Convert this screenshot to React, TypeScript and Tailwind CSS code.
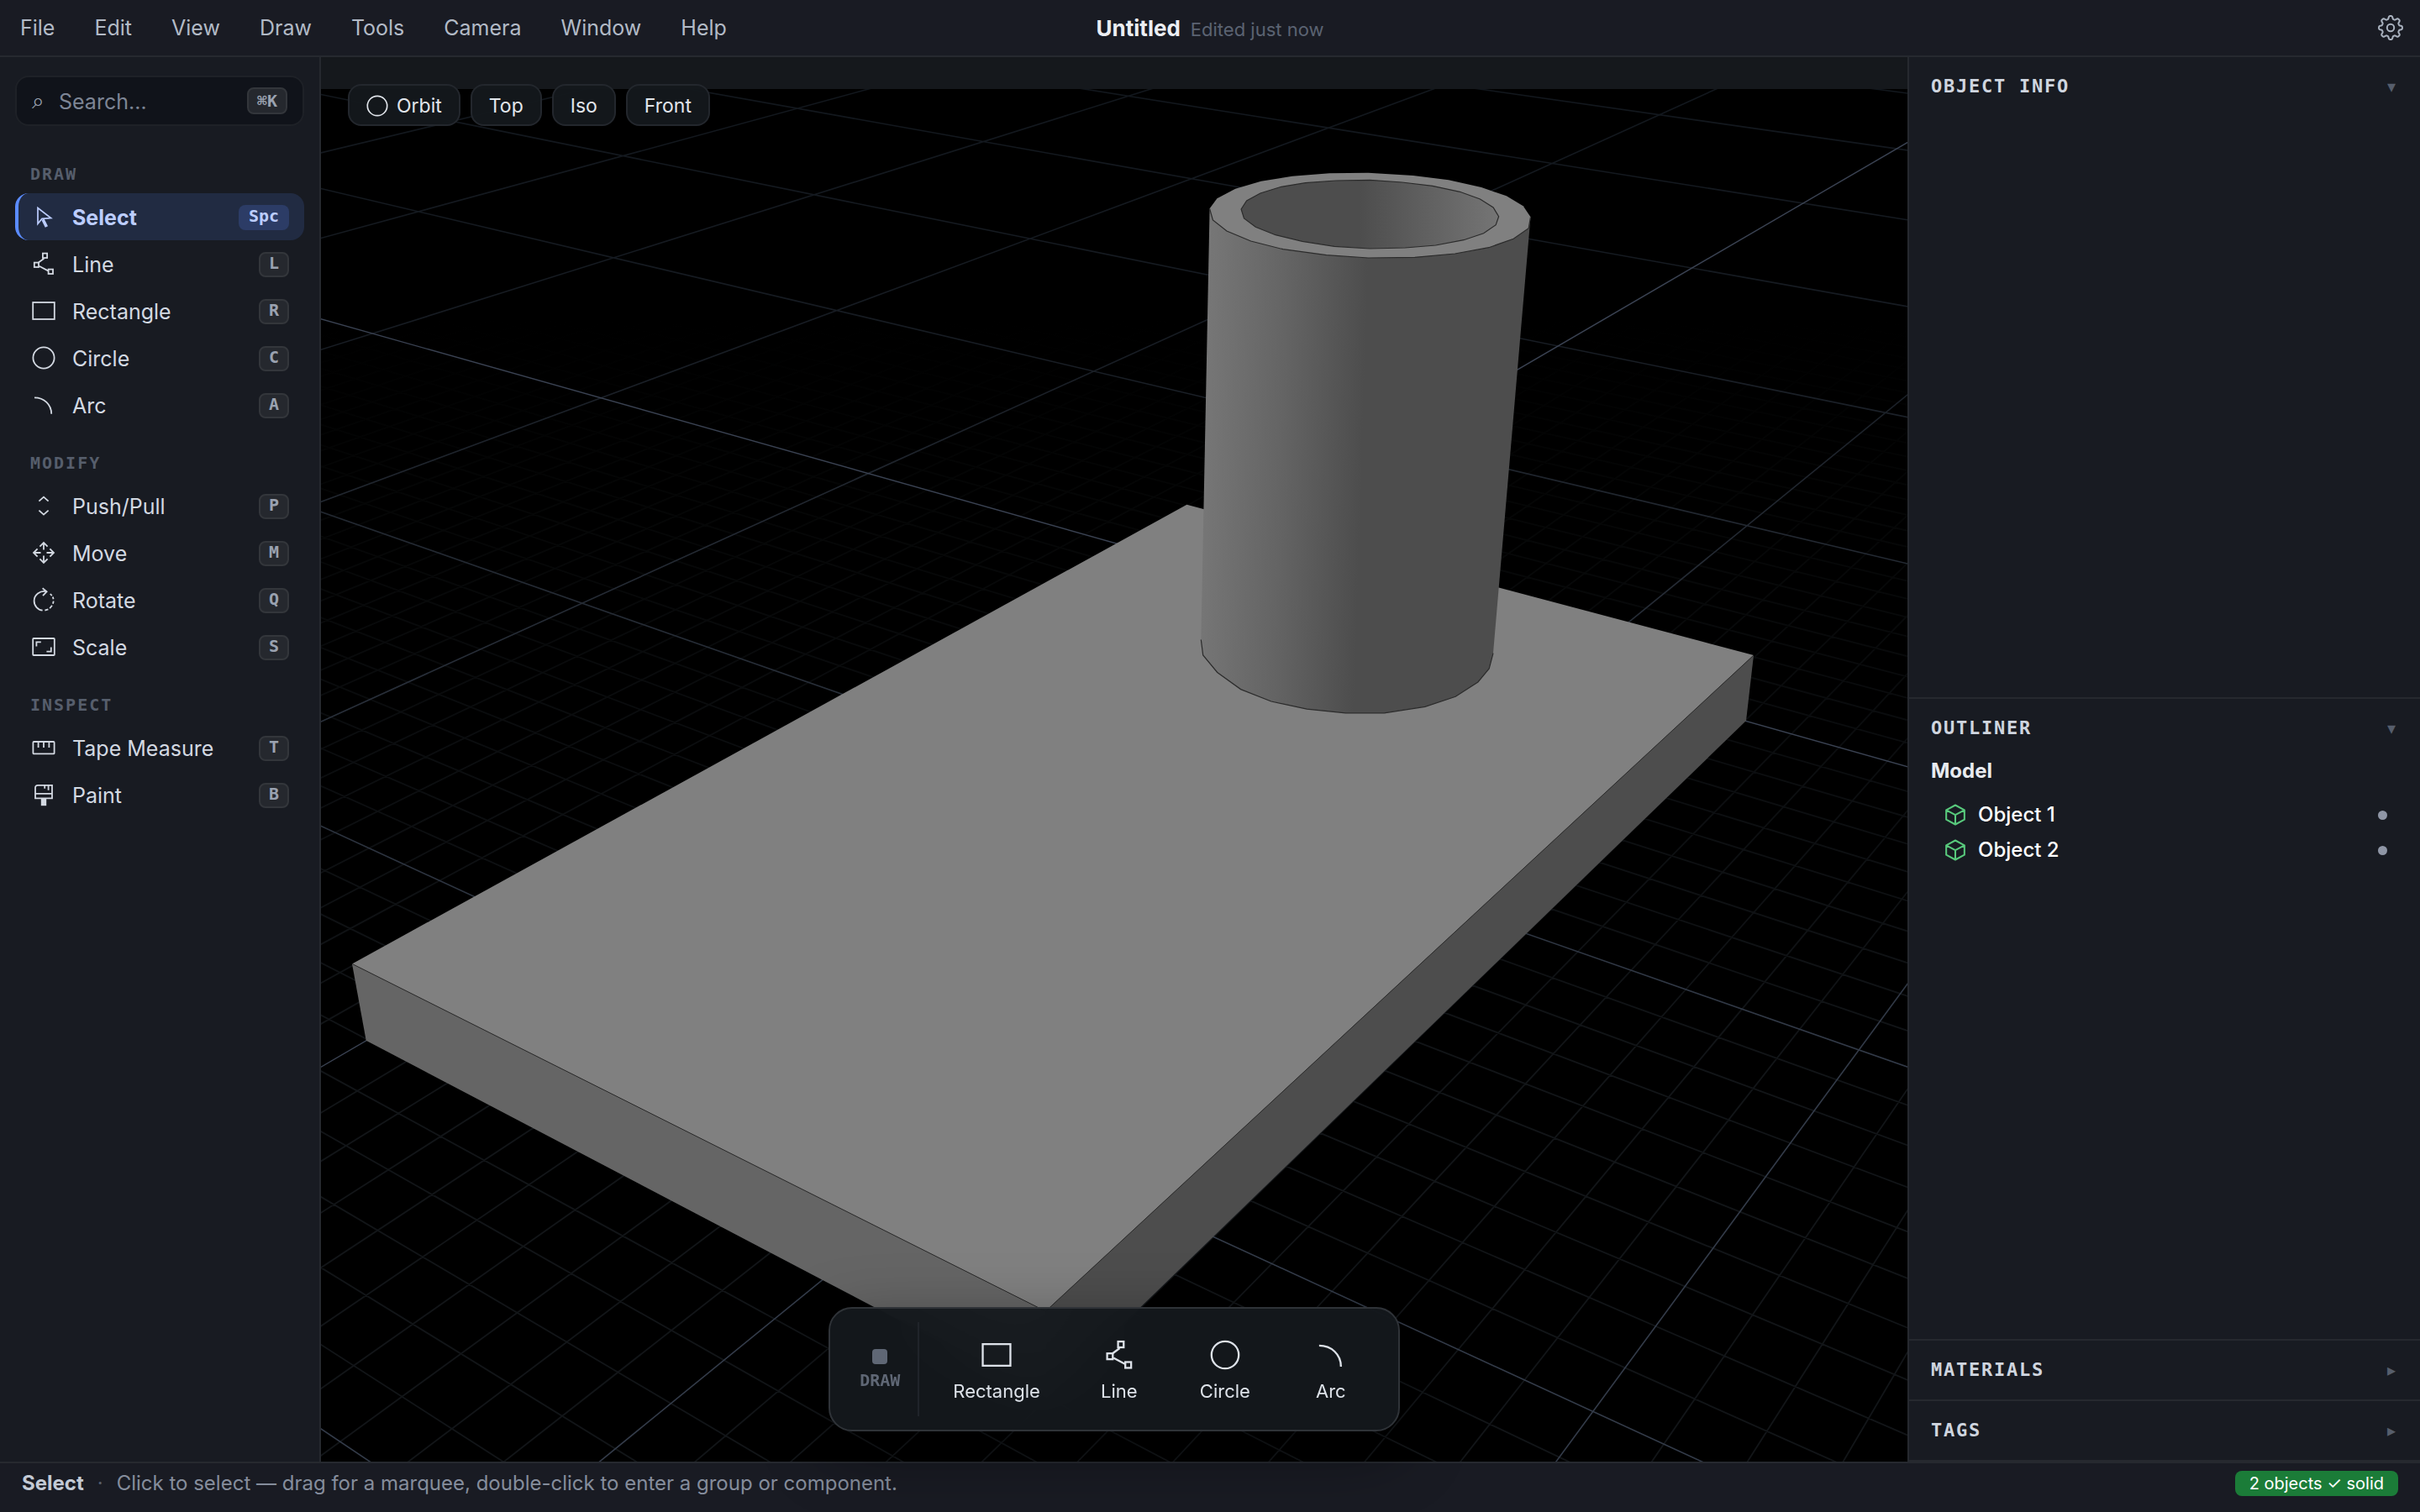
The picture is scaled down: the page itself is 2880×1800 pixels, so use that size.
import type { ReactNode } from 'react';

/* ---------- icons ---------- */

type IconProps = { className?: string };

function Icon({ className = 'size-7', children }: IconProps & { children: ReactNode }) {
  return (
    <svg
      viewBox="0 0 28 28"
      className={`shrink-0 overflow-visible ${className}`}
      fill="none"
      stroke="currentColor"
      strokeWidth="1.8"
      aria-hidden="true"
    >
      {children}
    </svg>
  );
}

const SelectIcon = (p: IconProps) => (
  <Icon {...p}>
    <path d="M7 3.6V22.4L12 16.3L22.6 15.6Z" strokeWidth="1.7" />
    <path d="M13 17.2L17.4 26" strokeWidth="3.6" />
  </Icon>
);
const LineIcon = (p: IconProps) => (
  <Icon {...p}>
    <path d="M14.4 7.8L7.8 12.6M8.6 16.8L19.2 22.4" />
    <rect x="12.9" y="1.6" width="5.2" height="5.4" />
    <rect x="2.8" y="12.6" width="5.2" height="5.4" />
    <rect x="19.6" y="20.6" width="5.4" height="5.4" />
  </Icon>
);
const RectangleIcon = (p: IconProps) => (
  <Icon {...p}>
    <rect x="1.2" y="4" width="25.6" height="20" />
  </Icon>
);
const CircleIcon = (p: IconProps) => (
  <Icon {...p}>
    <circle cx="14" cy="14" r="12.6" />
  </Icon>
);
const ArcIcon = (p: IconProps) => (
  <Icon {...p}>
    <path d="M3 5.4C14.5 5.4 23.2 13.5 23.2 24.8" />
  </Icon>
);
const PushPullIcon = (p: IconProps) => (
  <Icon {...p}>
    <path d="M8.4 8.6L14 3.6L19.6 8.6M8.4 19.6L14 24.6L19.6 19.6" />
  </Icon>
);
const MoveIcon = (p: IconProps) => (
  <Icon {...p}>
    <path d="M14 10.5V2.2M9.4 6.6L14 2L18.6 6.6M14 17.5V25.8M9.4 21.4L14 26L18.6 21.4M10.5 14H2.2M6.6 9.4L2 14L6.6 18.6M17.5 14H25.8M21.4 9.4L26 14L21.4 18.6" />
  </Icon>
);
const RotateIcon = (p: IconProps) => (
  <Icon {...p}>
    <path d="M17.4 4.2C9.5 2.6 2.6 8.4 2.6 15.2C2.6 21.3 7.2 26.2 12.6 26.6" />
    <path d="M12.6 0.2L17.6 4.4L13 9.2" />
    <path d="M15.4 26.6L19.4 25.4M21.2 24.2L24 20.8M25 18.8L25.7 15.6M25.6 13.2L24.8 10.4M23.8 9.2L21.8 7" />
  </Icon>
);
const ScaleIcon = (p: IconProps) => (
  <Icon {...p}>
    <rect x="1.2" y="4" width="25.6" height="20" rx="0.8" />
    <path d="M5.4 13.6V8.4H10.8M17.4 19.6H22.8V14.4" />
  </Icon>
);
const TapeIcon = (p: IconProps) => (
  <Icon {...p}>
    <rect x="1.4" y="7" width="25.2" height="14.4" rx="1" />
    <path d="M7.6 7.4V14M14 7.4V14M20.4 7.4V14" />
  </Icon>
);
const PaintIcon = (p: IconProps) => (
  <Icon {...p}>
    <path d="M7 2.8H24V18.4H4V5.8C4 4.2 5.2 2.8 7 2.8ZM4 12.8H24" />
    <path d="M15.2 3V6.8M19.6 3V8.8" />
    <path d="M14 18.6V27.2" strokeWidth="6.4" />
  </Icon>
);
const CubeIcon = () => (
  <svg viewBox="0 0 24 24" className="size-[26px] text-[#58c97c]" fill="none" stroke="currentColor" strokeWidth="1.9" strokeLinejoin="round" aria-hidden="true">
    <path d="M12 1.4L22 6.8V17.2L12 22.6L2 17.2V6.8ZM2 6.8L12 12.2L22 6.8M12 12.2V22.6" />
  </svg>
);

/** Eight-lobed cog outline. */
const COG =
  Array.from({ length: 144 }, (_, i) => {
    const a = (i / 144) * Math.PI * 2;
    const r = 12.2 + 1.8 * Math.tanh(2 * Math.cos(8 * a));
    return `${i ? 'L' : 'M'}${(15 + r * Math.cos(a)).toFixed(2)} ${(15 + r * Math.sin(a)).toFixed(2)}`;
  }).join('') + 'Z';

const GearIcon = () => (
  <svg viewBox="0 0 30 30" className="size-[30px]" fill="none" stroke="currentColor" strokeWidth="2" strokeLinejoin="round" aria-hidden="true">
    <path d={COG} />
    <circle cx="15" cy="15" r="4.2" />
  </svg>
);

/* ---------- 3D scene ---------- */

/** Projection of the ground plane (u, v) to scene units. */
const H = [595.5354, -362.0939, 1583.7382, -97.3783, -69.4784, 1030.0147, 0.1673191, 0.1204076];
const depth = (u: number, v: number) => H[6] * u + H[7] * v + 1;
const project = (u: number, v: number) => {
  const w = depth(u, v);
  return `${((H[0] * u + H[1] * v + H[2]) / w).toFixed(1)} ${((H[3] * u + H[4] * v + H[5]) / w).toFixed(1)}`;
};

function segment(u0: number, v0: number, u1: number, v1: number) {
  const near = 0.15;
  const w0 = depth(u0, v0);
  const w1 = depth(u1, v1);
  if (w1 <= near) return '';
  if (w0 < near) {
    const t = (near - w0) / (w1 - w0);
    return `M${project(u0 + (u1 - u0) * t, v0 + (v1 - v0) * t)}L${project(u1, v1)}`;
  }
  return `M${project(u0, v0)}L${project(u1, v1)}`;
}

function gridPath(from: number, to: number, far: number, skip: (n: number) => boolean) {
  let d = '';
  for (let n = from; n <= to; n++) {
    if (skip(n)) continue;
    const k = n / 10;
    d += segment(k, -8, k, far) + segment(-8, k, far, k);
  }
  return d;
}

const MINOR = gridPath(-40, 90, 14, (n) => n % 10 === 0);
const MAJOR = gridPath(-40, 160, 30, (n) => n % 10 !== 0 || n === 10);
const AXES = segment(1, -8, 1, 30) + segment(-8, 1, 30, 1);

const RIM_BACK =
  '1439.6,248.3 1448.4,236.3 1470.2,224.7 1500.8,215.7 1538,209.7 1582.3,206.3 1628.3,205.7 1681.8,209 1724,214.3 1763,223 1792.8,233.3 1812.7,245.3 1821.5,258.3';
const RIM_FRONT =
  '1821.5,258.3 1819.2,271.7 1801.2,284.3 1771.8,294.7 1731.6,302 1683.8,306.3 1628.3,307 1578.5,303.7 1526.8,296.7 1488.6,287 1459.9,275 1443.4,262 1439.6,248.3';
const BORE =
  '1477.1,249 1483.6,239 1500,230 1524.9,222.3 1553.6,217.7 1590,215 1630.2,214.3 1668.4,217 1704.8,221.3 1737.3,228.3 1761.4,237 1777.1,247 1783.6,257.7 1780.2,267.7 1765.6,277.7 1741.9,285.7 1708.6,292 1672.3,295 1630.2,296 1588,293.3 1549.8,287.3 1518,279.7 1494.3,270.3 1480.5,260';
const FOOT =
  '1429.3,761.5 1431.7,779.9 1448.7,800.5 1476.6,820.6 1512.9,835 1555.3,844.2 1601.4,848.8 1647.4,848.8 1695.9,841.3 1732.2,829.2 1758.9,812 1772.2,795.9 1777,777.6';

function Scene() {
  return (
    <svg
      viewBox="382 106 1888 1634"
      preserveAspectRatio="xMidYMid slice"
      className="absolute inset-0 size-full bg-black"
      role="img"
      aria-label="Slab with a hollow cylinder on it"
    >
      <defs>
        <linearGradient id="minor" gradientUnits="userSpaceOnUse" x1="0" y1="380" x2="0" y2="1500">
          <stop offset="0" stopColor="#000000" />
          <stop offset="0.2" stopColor="#050606" />
          <stop offset="0.45" stopColor="#0b0d0f" />
          <stop offset="0.8" stopColor="#121518" />
        </linearGradient>
        <linearGradient id="major" gradientUnits="userSpaceOnUse" x1="0" y1="100" x2="0" y2="1300">
          <stop offset="0" stopColor="#12171d" />
          <stop offset="0.25" stopColor="#171c23" />
          <stop offset="0.45" stopColor="#232932" />
          <stop offset="1" stopColor="#333b49" />
        </linearGradient>
        <linearGradient id="shell" gradientUnits="userSpaceOnUse" x1="1430" y1="500" x2="1622" y2="506">
          <stop offset="0" stopColor="#777777" />
          <stop offset="0.5" stopColor="#646464" />
          <stop offset="1" stopColor="#4d4d4d" />
        </linearGradient>
        <linearGradient id="bore" gradientUnits="userSpaceOnUse" x1="1618" y1="0" x2="1784" y2="0">
          <stop offset="0" stopColor="#4d4d4d" />
          <stop offset="1" stopColor="#757575" />
        </linearGradient>
      </defs>

      <path d={MINOR} stroke="url(#minor)" strokeWidth="1.8" fill="none" />
      <path d={MAJOR} stroke="url(#major)" strokeWidth="1.6" fill="none" />
      <path d={AXES} stroke="#3a4252" strokeWidth="1.4" fill="none" />

      <polygon points="419,1147.4 1244.4,1561 1246,1664 435.7,1238.7" fill="#656565" />
      <polygon points="1244.4,1561 2087,780 2078,858 1246,1664" fill="#4d4d4d" />
      <polygon points="1412.4,600.8 2087,780 1244.4,1561 419,1147.4" fill="#808080" />
      <path d="M419 1147.4L1244.4 1561L2087 780" stroke="#2b2b2b" strokeWidth="1" fill="none" />

      <polygon points={`1439.6,248.3 ${FOOT} 1821.5,258.3`} fill="url(#shell)" />
      <polygon points={`${RIM_BACK} ${RIM_FRONT}`} fill="#808080" />
      <polyline points={RIM_FRONT} stroke="#2b2b2b" strokeWidth="1.2" fill="none" />
      <polyline points={FOOT} stroke="#2b2b2b" strokeWidth="1.2" fill="none" />
      <polygon points={BORE} fill="url(#bore)" stroke="#2b2b2b" strokeWidth="1.2" />
    </svg>
  );
}

/* ---------- data ---------- */

const MENUS = ['File', 'Edit', 'View', 'Draw', 'Tools', 'Camera', 'Window', 'Help'];

type Tool = { name: string; key: string; icon: (p: IconProps) => ReactNode; active?: boolean };

const TOOL_GROUPS: { title: string; tools: Tool[] }[] = [
  {
    title: 'DRAW',
    tools: [
      { name: 'Select', key: 'Spc', icon: SelectIcon, active: true },
      { name: 'Line', key: 'L', icon: LineIcon },
      { name: 'Rectangle', key: 'R', icon: RectangleIcon },
      { name: 'Circle', key: 'C', icon: CircleIcon },
      { name: 'Arc', key: 'A', icon: ArcIcon },
    ],
  },
  {
    title: 'MODIFY',
    tools: [
      { name: 'Push/Pull', key: 'P', icon: PushPullIcon },
      { name: 'Move', key: 'M', icon: MoveIcon },
      { name: 'Rotate', key: 'Q', icon: RotateIcon },
      { name: 'Scale', key: 'S', icon: ScaleIcon },
    ],
  },
  {
    title: 'INSPECT',
    tools: [
      { name: 'Tape Measure', key: 'T', icon: TapeIcon },
      { name: 'Paint', key: 'B', icon: PaintIcon },
    ],
  },
];

const QUICK_TOOLS = [
  { name: 'Rectangle', icon: RectangleIcon },
  { name: 'Line', icon: LineIcon },
  { name: 'Circle', icon: CircleIcon },
  { name: 'Arc', icon: ArcIcon },
];

/* ---------- layout ---------- */

function MenuBar() {
  return (
    <header className="grid h-[68px] shrink-0 grid-cols-[1fr_auto_1fr] items-center border-b-2 border-[#26292f] bg-[#191b23] px-5">
      <nav className="flex gap-[47px] pl-1 text-[25px] leading-8 text-[#b2bac6]">
        {MENUS.map((m) => (
          <button key={m} type="button">{m}</button>
        ))}
      </nav>
      <div className="flex items-baseline gap-3 pt-0.5">
        <h1 className="text-[26px] leading-8 font-bold text-[#eceef2]">Untitled</h1>
        <span className="text-[22px] leading-8 text-[#5b6372]">Edited just now</span>
      </div>
      <button type="button" aria-label="Settings" className="justify-self-end text-[#a9b2bf]">
        <GearIcon />
      </button>
    </header>
  );
}

function ToolPanel() {
  return (
    <aside className="w-[382px] shrink-0 border-r-2 border-[#26292f] bg-[#181b22] px-[18px] pt-[22px]">
      <label className="mb-4 flex h-[60px] items-center gap-4 rounded-2xl border-2 border-[#1e2127] bg-[#10131a] px-[18px]">
        <span className="w-4 font-['DejaVu_Sans',sans-serif] text-[26px] leading-8 text-[#9aa2b0]" aria-hidden="true">⌕</span>
        <input
          type="search"
          aria-label="Search"
          placeholder="Search…"
          className="min-w-0 flex-1 bg-transparent pt-0.5 text-[25px] leading-8 outline-none placeholder:text-[#7d8595]"
        />
        <kbd className="flex h-8 items-center rounded-lg border-2 border-[#33363b] bg-[#25282e] px-2.5 font-['DejaVu_Sans_Mono',monospace] text-[20px] leading-6 font-bold text-[#9aa2b0]">⌘K</kbd>
      </label>
      {TOOL_GROUPS.map((g) => (
        <section key={g.title}>
          <h2 className="flex h-16 items-end px-[18px] pb-2.5 font-['DejaVu_Sans_Mono',monospace] text-[20px] leading-[26px] font-bold tracking-[0.1em] text-[#565e6c]">
            {g.title}
          </h2>
          {g.tools.map(({ name, key, icon: ToolIcon, active }) => (
            <button
              key={name}
              type="button"
              className={
                active
                  ? 'flex h-14 w-full items-center gap-5 rounded-2xl border-l-4 border-[#5b8cff] bg-[#212b42] pr-[18px] pl-4 text-left text-[25px] leading-8 font-bold text-[#bccdff]'
                  : 'flex h-14 w-full items-center gap-5 rounded-2xl pr-[18px] pl-5 text-left text-[25px] leading-8 text-[#d3d9e2]'
              }
            >
              <ToolIcon />
              <span className="flex-1 pt-0.5">{name}</span>
              <kbd
                className={
                  active
                    ? "mt-0.5 flex h-[30px] items-center rounded-lg bg-[#2c3c66] px-3 pb-1 font-['DejaVu_Sans_Mono',monospace] text-[20px] leading-6 font-bold text-[#bccdff]"
                    : "mt-0.5 flex h-[30px] items-center rounded-lg border-2 border-[#33363b] bg-[#25282e] px-2.5 pb-1 font-['DejaVu_Sans_Mono',monospace] text-[20px] leading-6 font-bold text-[#9aa2b0]"
                }
              >
                {key}
              </kbd>
            </button>
          ))}
        </section>
      ))}
    </aside>
  );
}

function Viewport() {
  const viewButton =
    'flex h-[50px] items-center gap-2.5 rounded-2xl border-2 border-[#23272d] bg-[#14181c]/95 px-5 pt-0.5 text-[23px] leading-7 text-[#e1e5eb]';
  return (
    <main className="relative flex min-w-0 flex-1 flex-col">
      <div className="h-[38px] shrink-0 bg-[#15181c]" />
      <div className="relative flex-1">
        <Scene />
      </div>

      <div className="absolute top-8 left-8 flex gap-3">
        <button type="button" className={viewButton}>
          <CircleIcon className="size-[26px]" />
          Orbit
        </button>
        <button type="button" className={viewButton}>Top</button>
        <button type="button" className={viewButton}>Iso</button>
        <button type="button" className={viewButton}>Front</button>
      </div>

      <div className="absolute inset-x-0 bottom-9 z-10 flex justify-center">
        <div className="flex h-[148px] items-stretch rounded-[28px] border-2 border-[#2f3338] bg-[#14181c]/95 py-4 pr-5 shadow-[0_24px_80px_rgba(0,0,0,0.4)] backdrop-blur-2xl">
          <div className="flex flex-col items-center justify-center gap-[7px] border-r-2 border-[#20242a] pr-[21px] pl-[35px] text-[#5f6775]">
            <span className="size-[18px] rounded bg-[#5f6775]" />
            <span className="font-['DejaVu_Sans_Mono',monospace] text-[20px] leading-6 font-bold">DRAW</span>
          </div>
          <div className="flex gap-1.5 pl-3">
            {QUICK_TOOLS.map(({ name, icon: ToolIcon }) => (
              <button
                key={name}
                type="button"
                className="flex min-w-[120px] flex-col items-center justify-center gap-[11px] px-7 pt-1 text-[22px] leading-7 text-[#dde2e9]"
              >
                <ToolIcon className="size-9" />
                {name}
              </button>
            ))}
          </div>
        </div>
      </div>
    </main>
  );
}

function PanelHeader({ title, open }: { title: string; open?: boolean }) {
  return (
    <button type="button" aria-expanded={!!open} className="flex h-[70px] w-full items-center justify-between pr-[29px] pl-[26px]">
      <span className="font-['DejaVu_Sans_Mono',monospace] text-[22px] leading-7 font-bold tracking-[0.08em] text-[#cfd5df]">{title}</span>
      <span className="font-['DejaVu_Sans',sans-serif] text-[20px] leading-7 text-[#565e6c]">{open ? '▾' : '▸'}</span>
    </button>
  );
}

function Inspector() {
  return (
    <aside className="flex w-[610px] shrink-0 flex-col border-l-2 border-[#26292f] bg-[#181b22]">
      <section className="flex-1 border-b-2 border-[#26292f]">
        <PanelHeader title="OBJECT INFO" open />
      </section>
      <section className="flex-1 border-b-2 border-[#26292f]">
        <PanelHeader title="OUTLINER" open />
        <h3 className="px-[26px] pb-[15px] text-[24px] leading-8 font-bold text-[#e8ebf0]">Model</h3>
        <ul>
          {['Object 1', 'Object 2'].map((name) => (
            <li key={name} className="flex h-[42px] items-center gap-3.5 pr-[39px] pl-[42px] text-[24px] leading-8 font-medium text-white">
              <CubeIcon />
              <span className="flex-1">{name}</span>
              <button type="button" aria-label={`Hide ${name}`} className="size-[11px] rounded-full bg-[#8f96a6]" />
            </li>
          ))}
        </ul>
      </section>
      <section className="border-b-2 border-[#26292f]">
        <PanelHeader title="MATERIALS" />
      </section>
      <section className="border-b-2 border-[#26292f]">
        <PanelHeader title="TAGS" />
      </section>
    </aside>
  );
}

function StatusBar() {
  return (
    <footer className="flex h-[60px] shrink-0 items-center gap-4 border-t-2 border-[#26292f] bg-[#191b23] px-[26px] pb-2.5 text-[24px] leading-8 text-[#858d9c]">
      <strong className="font-bold text-[#c3cad5]">Select</strong>
      <span className="text-[#565e6c]">·</span>
      <span className="flex-1">Click to select — drag for a marquee, double-click to enter a group or component.</span>
      <span className="rounded-lg bg-[#1b7c38] px-[17px] text-[20px] leading-[30px] text-white">2 objects ✓ solid</span>
    </footer>
  );
}

export default function App() {
  return (
    <div className="flex h-screen flex-col bg-[#181b22] font-['Inter',sans-serif] text-white">
      <MenuBar />
      <div className="flex min-h-0 flex-1">
        <ToolPanel />
        <Viewport />
        <Inspector />
      </div>
      <StatusBar />
    </div>
  );
}
